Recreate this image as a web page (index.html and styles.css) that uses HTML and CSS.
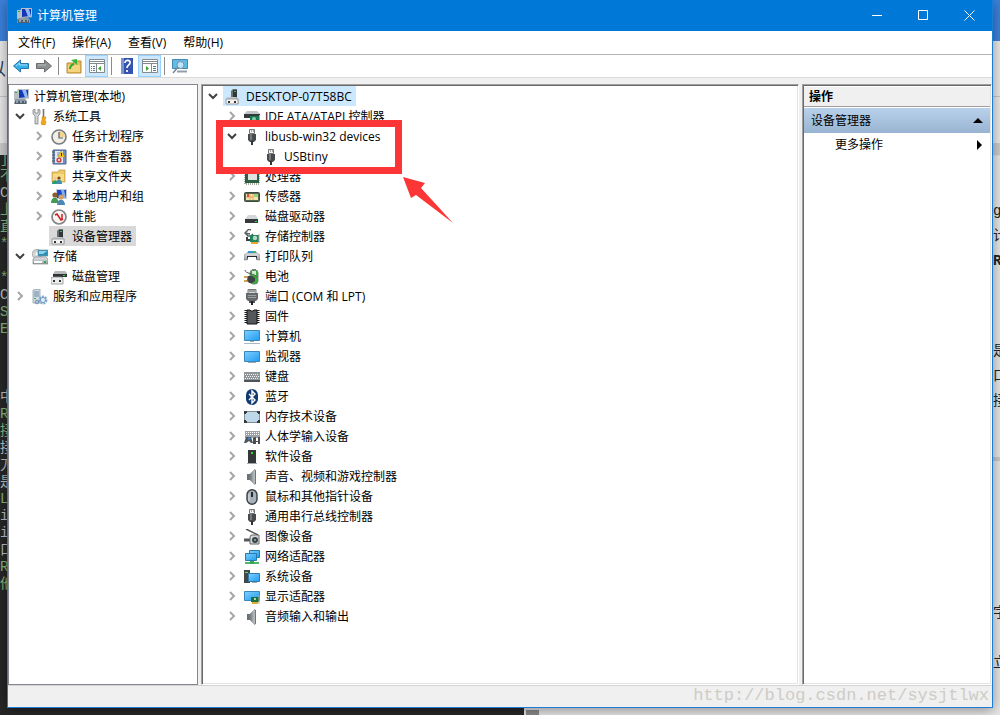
FILE: index.html
```html
<!DOCTYPE html>
<html lang="zh-CN">
<head>
  <meta charset="UTF-8">
  <meta name="viewport" content="width=device-width, initial-scale=1.0">
  <title>计算机管理</title>
  <link rel="stylesheet" href="styles.css">
</head>
<body>
  <!-- Icon set -->
  <svg class="sprite" aria-hidden="true">
    <defs>
      <linearGradient id="screen" x1="0" y1="0" x2="1" y2="1">
        <stop offset="0" stop-color="#7fd0ff"/>
        <stop offset="1" stop-color="#1f9bf0"/>
      </linearGradient>
      <linearGradient id="metal" x1="0" y1="0" x2="0" y2="1">
        <stop offset="0" stop-color="#e4e7e9"/>
        <stop offset="1" stop-color="#9a9fa3"/>
      </linearGradient>
      <linearGradient id="cone" x1="0" y1="0" x2="1" y2="0">
        <stop offset="0" stop-color="#6e7478"/>
        <stop offset="1" stop-color="#c8cdd0"/>
      </linearGradient>
    </defs>
    <symbol id="open" viewBox="0 0 14 14"><path d="M3 5l4 4 4-4" fill="none" stroke="#404040" stroke-width="2"/></symbol>
    <symbol id="closed" viewBox="0 0 14 14"><path d="M5 3l4 4-4 4" fill="none" stroke="#a6a6a6" stroke-width="2"/></symbol>
    <symbol id="mmc" viewBox="0 0 16 16">
      <path d="M5 0h11v9l-11 1z" fill="#d5d8dc" stroke="#8a9098" stroke-width=".6"/>
      <path d="M6 1h9v7l-9 1z" fill="#1238b8"/><path d="M9 1h4l2 7-3 .5z" fill="#8fb8f4"/>
      <path d="M1 2h4v9H1z" fill="#b8bec6"/><path d="M2 3h2v1H2z" fill="#26b040"/>
      <path d="M2 10h10l2 2v3H1z" fill="#8b98a5"/><path d="M2 12h11v3H2z" fill="#51606e"/><path d="M3 13h2M7 13h2M11 13h1" stroke="#dde4ea"/>
    </symbol>
    <symbol id="tools" viewBox="0 0 16 16">
      <path d="M1 1v4l2 2v8h3V7l2-2V1L6 0v4H3V0z" fill="#d3d5d7" stroke="#70757a" stroke-width=".7"/>
      <path d="M11 0h1v8h-1z" fill="#777" stroke="#777" stroke-width=".6"/><path d="M10 8h4l-1 3 1 2-1 3h-3l-1-2 1-3z" fill="#f0a91c" stroke="#c27c0c" stroke-width=".5"/>
    </symbol>
    <symbol id="clock" viewBox="0 0 16 16">
      <circle cx="8" cy="8" r="7" fill="#f3eee2" stroke="#777c82" stroke-width="1.6"/>
      <path d="M8 8V2a6 6 0 0 1 6 6z" fill="#f7d28b"/><path d="M8 3v6h4" fill="none" stroke="#53616d" stroke-width="1.2"/>
    </symbol>
    <symbol id="event" viewBox="0 0 16 16">
      <path d="M2 1h13v14H2z" fill="#6f8fc0" stroke="#4d6688"/><path d="M4 2h8v12H4z" fill="#dfe9f3"/>
      <path d="M1 3h3M1 6h3M1 9h3M1 12h3" stroke="#4d5966"/><path d="M6 4h3M6 6h2" stroke="#7f93aa"/><path d="M10 2l4 6H7z" fill="#ffcc18" stroke="#ae8200" stroke-width=".5"/><path d="M10.500 4v3" stroke="#333"/>
      <circle cx="8" cy="11" r="2.600" fill="#d63b3b"/><path d="M7 10l2 2m0-2l-2 2" stroke="#fff" stroke-width=".8"/>
    </symbol>
    <symbol id="share" viewBox="0 0 16 16">
      <path d="M1 3h6l1-2h6v12H1z" fill="#edc863" stroke="#bd9640" stroke-width=".7"/><path d="M2 5h11v7H2z" fill="#f7dc87"/>
      <circle cx="4" cy="9" r="1.6" fill="#f0c69c"/><circle cx="8" cy="9" r="1.6" fill="#754524"/><path d="M1 15c0-5 6-5 6 0z" fill="#2e9b73"/><path d="M5 15c0-6 6-6 6 0z" fill="#3c91a7"/>
    </symbol>
    <symbol id="users" viewBox="0 0 16 16">
      <path d="M5 0h11v10H5z" fill="#c8ccd4"/><path d="M6 1h9v8H6z" fill="#1c48c8"/><path d="M10 1h3l2 8h-3z" fill="#85adf0"/>
      <circle cx="4" cy="6" r="2.6" fill="#8b5c24"/><circle cx="10" cy="8" r="2.6" fill="#d2a062"/><path d="M0 14c0-7 7-7 8 0z" fill="#479951"/><path d="M6 16c0-7 8-7 8 0z" fill="#4c87b6"/>
    </symbol>
    <symbol id="perf" viewBox="0 0 16 16">
      <circle cx="8" cy="8" r="7" fill="#f8f6f3" stroke="#858585" stroke-width="1.7"/><path d="M4 6l2-1 4 6 2-1M11 5v5" fill="none" stroke="#cc1d1d" stroke-width="1.5"/>
    </symbol>
    <symbol id="device" viewBox="0 0 16 16">
      <path d="M6 2l2-2h4v9H6z" fill="#6d7173"/><path d="M8 1h4v8H8z" fill="#333738"/>
      <path d="M9 2h2v1H9z" fill="#37c05c"/>
      <path d="M2 8h9l3 2v5H1v-5z" fill="#c3c7c9"/><path d="M1 10h12v5H1z" fill="#f4f4f4" stroke="#8a8d90" stroke-width=".8"/><path d="M3 12h2v2H3zM9 12h2v2H9z" fill="#333"/>
    </symbol>
    <symbol id="storage" viewBox="0 0 16 16">
      <ellipse cx="5" cy="5" rx="5" ry="4.5" fill="#d2d5d6" stroke="#8d9194" stroke-width=".7"/><circle cx="5" cy="5" r="1.5" fill="#fff"/>
      <path d="M6 1h10v6H6z" fill="#2890b8" stroke="#78929f" stroke-width=".7"/><path d="M7 2h8l-4 3H7z" fill="#8fd2e7"/>
      <path d="M1 10l2-2h11l2 2v5H1z" fill="url(#metal)" stroke="#75797b" stroke-width=".6"/><path d="M2 12h8v2H2z" fill="#fff"/><path d="M12 12h2v2h-2z" fill="#1fb13e"/>
    </symbol>
    <symbol id="disks" viewBox="0 0 16 16">
      <path d="M4 2h10l2 2v1H2z" fill="#b6babb"/><path d="M2 5h14v3H2z" fill="#303435"/><path d="M12 6h2v1h-2z" fill="#2fd64e"/><path d="M0 9l2-1h8l2 1v6H0z" fill="#eceeee" stroke="#8a8d90" stroke-width=".8"/><path d="M2 11h2v2H2zM8 11h2v2H8z" fill="#333"/>
    </symbol>
    <symbol id="services" viewBox="0 0 16 16">
      <path d="M1 1l7-1v14H1z" fill="#d3dce5" stroke="#8594a3" stroke-width=".7"/><path d="M2 3h5M2 5h5M2 7h5" stroke="#6987a4"/><path d="M2 9h2v1H2z" fill="#36b04c"/>
      <circle cx="11" cy="11" r="3.5" fill="none" stroke="#7daad0" stroke-width="2" stroke-dasharray="2 1"/><circle cx="11" cy="11" r="2.6" fill="#e3eef7" stroke="#6b9ac3"/><circle cx="5" cy="13" r="1.8" fill="#a9c4da" stroke="#7391ad"/>
    </symbol>
    <symbol id="ide" viewBox="0 0 16 16">
      <path d="M3 2h10l3 3H0z" fill="#bfc4c6"/><path d="M0 5h16v4H0z" fill="#35393b"/><path d="M6 7h9v7H6z" fill="#167a50"/><circle cx="10" cy="10" r="2" fill="#8dc9a9"/><path d="M15.500 6v9" stroke="#aaa"/>
    </symbol>
    <symbol id="usb" viewBox="0 0 16 16">
      <path d="M5.500.5h5v4h-5z" fill="#f1f1f1" stroke="#777"/><path d="M7 2h1m1 0h1" stroke="#666"/><path d="M4 5h8v6l-2 2H6l-2-2z" fill="#484b4d"/><path d="M6 5h2v6H6z" fill="#777b7e"/><path d="M8 12v4" stroke="#333" stroke-width="2"/>
    </symbol>
    <symbol id="cpu" viewBox="0 0 16 16">
      <path d="M1 1h14v14H1z" fill="none" stroke="#4b5945" stroke-width="1" stroke-dasharray="1 1"/><path d="M1 1h14v13H1z" fill="#2c5f41"/><path d="M4 3h9v8H4z" fill="#dfe2e1"/>
    </symbol>
    <symbol id="sensor" viewBox="0 0 16 16">
      <rect x=".5" y="3.500" width="15" height="9" rx="1" fill="#52694f" stroke="#3d4a3b"/><path d="M2 5h12v6H2z" fill="#eee7af"/><path d="M2 8h7M6 5v6M9 5v6" stroke="#e6a75f"/><path d="M3 5h2v3H3z" fill="#df4848"/><path d="M10 5h4v3h-4z" fill="#a6cd7b"/>
    </symbol>
    <symbol id="drive" viewBox="0 0 16 16">
      <path d="M4 6h8l2 4H1z" fill="#d4d6d7"/><path d="M1 10h13v4H1z" fill="#34393b"/><path d="M11 12h2v1h-2z" fill="#2fe157"/>
    </symbol>
    <symbol id="controller" viewBox="0 0 16 16">
      <path d="M7 1L5 0 1 4l3 3h3L9 5M1 4l5 1" fill="none" stroke="#5d6062" stroke-width="1.5"/><path d="M3 8v3h3" fill="none" stroke="#3d4042" stroke-width="2"/><path d="M6 6h9v7H6z" fill="#20845b"/><circle cx="11" cy="9" r="2.200" fill="#b7d8c7"/><path d="M15 5v9" stroke="#aaa"/><path d="M7 14h7" stroke="#eaa72e" stroke-width="2"/>
    </symbol>
    <symbol id="printer" viewBox="0 0 16 16">
      <path d="M4 2h8l1 4H3z" fill="#2c9ddf"/><path d="M9 2h3v4H9z" fill="#45bd52"/><path d="M0 6l3-2h10l3 2v5H0z" fill="url(#metal)" stroke="#777" stroke-width=".5"/><path d="M3 7h10v4H3z" fill="#252a2e"/><path d="M4 8h8l1 5H3z" fill="#fff"/>
    </symbol>
    <symbol id="battery" viewBox="0 0 16 16">
      <path d="M8 0h4v2H8z" fill="#777"/><rect x="6" y="1" width="8" height="14" rx="3" fill="#37ad3b" stroke="#75847b"/><path d="M8 2h4v4H8z" fill="#caf0cb"/><path d="M1 1c0 4 9 3 12 7" fill="none" stroke="#55595b"/><path d="M0 8h4M0 12h4" stroke="#c38218" stroke-width="1.500"/><path d="M4 7h4l3 2v3l-3 2H5l-2-3z" fill="#3e4245"/>
    </symbol>
    <symbol id="port" viewBox="0 0 16 16">
      <path d="M4 .5h8v4H4z" fill="#d2d4d5" stroke="#777"/><path d="M6 1v2m2-2v2m2-2v2" stroke="#666"/><path d="M2 4h12v6l-2 2H4l-2-2z" fill="#65696c"/><path d="M4 6.500h8M4 8.500h8" stroke="#9ba0a3"/><path d="M5 12h6v2H5z" fill="#515456"/><path d="M8 12v4" stroke="#222" stroke-width="2"/>
    </symbol>
    <symbol id="firmware" viewBox="0 0 16 16">
      <path d="M2 1v14M14 1v14" stroke="#191919" stroke-width="3" stroke-dasharray="1 1"/><path d="M3 1h3l1 1h2l1-1h3v14H3z" fill="#55585a" stroke="#151515"/>
    </symbol>
    <symbol id="computer" viewBox="0 0 16 16">
      <path d="M.5 1.500h15v10H.5z" fill="url(#screen)" stroke="#3a86b8"/><path d="M6 12h4v1H6z" fill="#9faab1"/><path d="M0 14.500h16" stroke="#a9bac4"/>
    </symbol>
    <symbol id="monitor" viewBox="0 0 16 16">
      <path d="M.5 2.500h15v10H.5z" fill="url(#screen)" stroke="#3a86b8"/><path d="M4 13.500h8" stroke="#9faab1"/>
    </symbol>
    <symbol id="keyboard" viewBox="0 0 16 16">
      <path d="M0 3h16v10H0z" fill="#8f9599"/><path d="M0 11h16v2H0z" fill="#4e5457"/><path d="M1 5.500h14M2 7.500h13M1 9.500h14" stroke="#f0f2f3" stroke-dasharray="1 1"/>
    </symbol>
    <symbol id="bluetooth" viewBox="0 0 16 16">
      <rect x="2" width="12" height="16" rx="6" fill="#113a70"/><path d="M5 5l6 6-3 3V2l3 3-6 6" fill="none" stroke="#fff" stroke-width="1.400"/>
    </symbol>
    <symbol id="memory" viewBox="0 0 16 16">
      <rect x=".5" y="2.500" width="15" height="11" rx="2" fill="#bfd8e9" stroke="#7e8b95"/><path d="M1 5V3h2M13 3h2v2M1 11v2h2M13 13h2v-2" fill="none" stroke="#343a3e" stroke-width="2"/>
    </symbol>
    <symbol id="hid" viewBox="0 0 16 16">
      <path d="M1 2h15v7H1z" fill="#9ba1a5"/><path d="M2 3.500h13M2 5.500h13" stroke="#fff" stroke-dasharray="1 1"/><path d="M0 14l2-6h5l2 6H7l-2-2-3 2z" fill="#4f555b"/><circle cx="5" cy="9.500" r="1.200" fill="#2a86df"/><path d="M9 15V9l2-1h1v4h2V8h2v7h-2v-2h-2v2z" fill="#4a4f52"/>
    </symbol>
    <symbol id="software" viewBox="0 0 16 16">
      <path d="M4 1h8v13H4z" fill="#343839"/><path d="M7 3h2v2H7z" fill="#24e02e"/><path d="M3 14h10v1H3z" fill="#a3a6a8"/>
    </symbol>
    <symbol id="sound" viewBox="0 0 16 16">
      <path d="M3 5h3v6H3z" fill="#6a7074"/><path d="M6 5l5-5v16l-5-5z" fill="url(#cone)" stroke="#8a9094" stroke-width=".5"/><path d="M11.500 1v14" stroke="#707679"/>
    </symbol>
    <symbol id="mouse" viewBox="0 0 16 16">
      <rect x="3" y=".7" width="10" height="14.600" rx="5" fill="#a8b1b9" stroke="#373d42" stroke-width="1.400"/><rect x="7" y="3" width="2" height="5" fill="#252a2d"/><path d="M5 5v7" stroke="#e0e5e8"/>
    </symbol>
    <symbol id="imaging" viewBox="0 0 16 16">
      <path d="M2 0l12 6" stroke="#4d5256" stroke-width="1.500"/><path d="M0 11h8" stroke="#55595b" stroke-width="3"/><path d="M7 6h8v9H6V8z" fill="#d4d7d9" stroke="#666"/><circle cx="11" cy="11" r="3" fill="#384147"/><circle cx="11" cy="11" r="1" fill="#80bd9c"/>
    </symbol>
    <symbol id="network" viewBox="0 0 16 16">
      <path d="M5.500 1.500h10v7h-10z" fill="url(#screen)" stroke="#287ba9"/><path d="M1.500 4.500h11v7h-11z" fill="url(#screen)" stroke="#287ba9"/><path d="M1 14h14" stroke="#50b66a" stroke-width="2"/><path d="M6 12h4v3H6z" fill="#38a454"/>
    </symbol>
    <symbol id="system" viewBox="0 0 16 16">
      <path d="M0 1h6v13H0z" fill="#42474a"/><path d="M1 3h3v1H1z" fill="#60db5c"/><path d="M4.500 4.500h11v8h-11z" fill="url(#screen)" stroke="#2e7ba9"/><path d="M8 13.500h5" stroke="#a0a9ae"/>
    </symbol>
    <symbol id="display" viewBox="0 0 16 16">
      <path d="M.5 2.500h15v9H.5z" fill="url(#screen)" stroke="#3a86b8"/><path d="M7 8h8v5H7z" fill="#18733f"/><path d="M8 13h6v2H8z" fill="#e3ad31"/><path d="M10 9h2v2h-2z" fill="#b1d1bb"/><path d="M15 6v9" stroke="#aaa"/>
    </symbol>
  </svg>

  <div class="desktop">
    <!-- Windows behind the console -->
    <div class="browser">
      <div class="browser-bar"></div>
      <div class="browser-head"><span>以</span></div>
      <div class="browser-band"></div>
      <div class="article">
<pre>g
计
<b>RE</b></pre>
<pre>是
口
接</pre>
        <hr>
<pre>字

立</pre>
      </div>
    </div>
    <div class="editor">
<pre>]
不
<i>C</i>
上
直
*

*
<i>CS</i>
S
E



<i>中</i>
R
接
<i>接</i>
<i>刀</i>
<i>是</i>
L
<i>in</i>
<i>in</i>
<i>口</i>
R
他</pre>
    </div>

    <div class="window">
      <header class="titlebar">
        <svg class="icon"><use href="#mmc"/></svg>
        <h1>计算机管理</h1>
        <button class="caption" aria-label="最小化"><svg viewBox="0 0 11 11"><path d="M0 5.500h10"/></svg></button>
        <button class="caption" aria-label="最大化"><svg viewBox="0 0 11 11"><path d="M.5.5h9v9h-9z"/></svg></button>
        <button class="caption" aria-label="关闭"><svg viewBox="0 0 11 11"><path d="M.5.5l10 10m0-10l-10 10"/></svg></button>
      </header>

      <nav class="menubar">
        <button>文件(F)</button>
        <button>操作(A)</button>
        <button>查看(V)</button>
        <button>帮助(H)</button>
      </nav>

      <div class="toolbar">
        <button aria-label="后退"><svg class="icon" viewBox="0 0 16 16"><path d="M.5 8l7-6v3.500h8v5h-8V14z" fill="#36aee8" stroke="#2676ad"/><path d="M3 8l3.500-3v2H14" fill="none" stroke="#a3e0fa"/></svg></button>
        <button aria-label="前进"><svg class="icon" viewBox="0 0 16 16"><path d="M15.500 8l-7-6v3.500h-8v5h8V14z" fill="#8d9091" stroke="#696d6f"/><path d="M2 7h8" stroke="#b9bcbe"/></svg></button>
        <span class="separator"></span>
        <button aria-label="向上"><svg class="icon" viewBox="0 0 16 16"><path d="M1 5h7l1-2h6v12H1z" fill="#e8bd5d" stroke="#b78b35"/><path d="M2 7h12v7H2z" fill="#f4d47f"/><path d="M4 11c0-3 1-4 4-5" fill="none" stroke="#31a835" stroke-width="2"/><path d="M5 2l6-1v6z" fill="#37b43b"/></svg></button>
        <button class="pressed" aria-label="显示/隐藏控制台树"><svg class="icon" viewBox="0 0 16 16"><path d="M.5 1.500h15v13H.5z" fill="#fff" stroke="#858a8e"/><path d="M1 3.500h14M1 5.500h14M7.500 6v8" stroke="#858a8e"/><path d="M2 8.500h1m1 0h2M2 10.500h1m1 0h2M2 12.500h1m1 0h2" stroke="#587798"/><path d="M12 8v5l-3-2.500z" fill="#38a52b"/></svg></button>
        <span class="separator"></span>
        <button aria-label="帮助"><svg class="icon" viewBox="0 0 16 16"><path d="M2 0h12v16H2z" fill="#3553ae"/><path d="M2 0h3v16H2z" fill="#7893cf"/><path d="M6 5c0-4 6-3 5 0 0 2-3 2-3 5m0 2v2" fill="none" stroke="#fff" stroke-width="1.700"/></svg></button>
        <button class="pressed" aria-label="显示/隐藏操作窗格"><svg class="icon" viewBox="0 0 16 16"><path d="M.5 1.500h15v13H.5z" fill="#fff" stroke="#858a8e"/><path d="M1 3.500h14M1 5.500h14M9.500 6v8" stroke="#858a8e"/><path d="M11 8.500h3m-3 2h3m-3 2h3" stroke="#587798"/><path d="M4 8v5l3-2.500z" fill="#38a52b"/></svg></button>
        <span class="separator"></span>
        <button aria-label="扫描检测硬件改动"><svg class="icon" viewBox="0 0 16 16"><path d="M.5 1.500h15v9H.5z" fill="#60bce7" stroke="#4588a9"/><path d="M5 13.500h10" stroke="#90a0aa" stroke-width="2"/><circle cx="8.500" cy="7" r="3.500" fill="#c0e5f6" stroke="#80919c"/><path d="M6 9l-5 6" stroke="#718a9d" stroke-width="1.500"/></svg></button>
      </div>

      <main class="panes">
        <section class="pane scope">
          <ul class="tree">
            <li>
              <div class="row"><span class="item"><svg class="icon"><use href="#mmc"/></svg>计算机管理(本地)</span></div>
              <ul class="first">
                <li>
                  <div class="row"><svg class="twist"><use href="#open"/></svg><span class="item"><svg class="icon"><use href="#tools"/></svg>系统工具</span></div>
                  <ul>
                    <li class="row"><svg class="twist"><use href="#closed"/></svg><span class="item"><svg class="icon"><use href="#clock"/></svg>任务计划程序</span></li>
                    <li class="row"><svg class="twist"><use href="#closed"/></svg><span class="item"><svg class="icon"><use href="#event"/></svg>事件查看器</span></li>
                    <li class="row"><svg class="twist"><use href="#closed"/></svg><span class="item"><svg class="icon"><use href="#share"/></svg>共享文件夹</span></li>
                    <li class="row"><svg class="twist"><use href="#closed"/></svg><span class="item"><svg class="icon"><use href="#users"/></svg>本地用户和组</span></li>
                    <li class="row"><svg class="twist"><use href="#closed"/></svg><span class="item"><svg class="icon"><use href="#perf"/></svg>性能</span></li>
                    <li class="row"><svg class="twist"></svg><span class="item inactive"><svg class="icon"><use href="#device"/></svg>设备管理器</span></li>
                  </ul>
                </li>
                <li>
                  <div class="row"><svg class="twist"><use href="#open"/></svg><span class="item"><svg class="icon"><use href="#storage"/></svg>存储</span></div>
                  <ul>
                    <li class="row"><svg class="twist"></svg><span class="item"><svg class="icon"><use href="#disks"/></svg>磁盘管理</span></li>
                  </ul>
                </li>
                <li class="row"><svg class="twist"><use href="#closed"/></svg><span class="item"><svg class="icon"><use href="#services"/></svg>服务和应用程序</span></li>
              </ul>
            </li>
          </ul>
        </section>

        <section class="pane sunken">
          <ul class="tree">
            <li>
              <div class="row"><svg class="twist"><use href="#open"/></svg><span class="item selected"><svg class="icon"><use href="#device"/></svg>DESKTOP-07T58BC</span></div>
              <ul>
                <li class="row"><svg class="twist"><use href="#closed"/></svg><span class="item"><svg class="icon"><use href="#ide"/></svg>IDE ATA/ATAPI 控制器</span></li>
                <li class="marked">
                  <div class="row"><svg class="twist"><use href="#open"/></svg><span class="item"><svg class="icon"><use href="#usb"/></svg>libusb-win32 devices</span></div>
                  <ul>
                    <li class="row"><svg class="twist"></svg><span class="item"><svg class="icon"><use href="#usb"/></svg>USBtiny</span></li>
                  </ul>
                  <svg class="arrow" viewBox="0 0 52 48"><path d="M1 1l22 6-4 5 32 35-37-28-5 3z"/></svg>
                </li>
                <li class="row"><svg class="twist"><use href="#closed"/></svg><span class="item"><svg class="icon"><use href="#cpu"/></svg>处理器</span></li>
                <li class="row"><svg class="twist"><use href="#closed"/></svg><span class="item"><svg class="icon"><use href="#sensor"/></svg>传感器</span></li>
                <li class="row"><svg class="twist"><use href="#closed"/></svg><span class="item"><svg class="icon"><use href="#drive"/></svg>磁盘驱动器</span></li>
                <li class="row"><svg class="twist"><use href="#closed"/></svg><span class="item"><svg class="icon"><use href="#controller"/></svg>存储控制器</span></li>
                <li class="row"><svg class="twist"><use href="#closed"/></svg><span class="item"><svg class="icon"><use href="#printer"/></svg>打印队列</span></li>
                <li class="row"><svg class="twist"><use href="#closed"/></svg><span class="item"><svg class="icon"><use href="#battery"/></svg>电池</span></li>
                <li class="row"><svg class="twist"><use href="#closed"/></svg><span class="item"><svg class="icon"><use href="#port"/></svg>端口 (COM 和 LPT)</span></li>
                <li class="row"><svg class="twist"><use href="#closed"/></svg><span class="item"><svg class="icon"><use href="#firmware"/></svg>固件</span></li>
                <li class="row"><svg class="twist"><use href="#closed"/></svg><span class="item"><svg class="icon"><use href="#computer"/></svg>计算机</span></li>
                <li class="row"><svg class="twist"><use href="#closed"/></svg><span class="item"><svg class="icon"><use href="#monitor"/></svg>监视器</span></li>
                <li class="row"><svg class="twist"><use href="#closed"/></svg><span class="item"><svg class="icon"><use href="#keyboard"/></svg>键盘</span></li>
                <li class="row"><svg class="twist"><use href="#closed"/></svg><span class="item"><svg class="icon"><use href="#bluetooth"/></svg>蓝牙</span></li>
                <li class="row"><svg class="twist"><use href="#closed"/></svg><span class="item"><svg class="icon"><use href="#memory"/></svg>内存技术设备</span></li>
                <li class="row"><svg class="twist"><use href="#closed"/></svg><span class="item"><svg class="icon"><use href="#hid"/></svg>人体学输入设备</span></li>
                <li class="row"><svg class="twist"><use href="#closed"/></svg><span class="item"><svg class="icon"><use href="#software"/></svg>软件设备</span></li>
                <li class="row"><svg class="twist"><use href="#closed"/></svg><span class="item"><svg class="icon"><use href="#sound"/></svg>声音、视频和游戏控制器</span></li>
                <li class="row"><svg class="twist"><use href="#closed"/></svg><span class="item"><svg class="icon"><use href="#mouse"/></svg>鼠标和其他指针设备</span></li>
                <li class="row"><svg class="twist"><use href="#closed"/></svg><span class="item"><svg class="icon"><use href="#usb"/></svg>通用串行总线控制器</span></li>
                <li class="row"><svg class="twist"><use href="#closed"/></svg><span class="item"><svg class="icon"><use href="#imaging"/></svg>图像设备</span></li>
                <li class="row"><svg class="twist"><use href="#closed"/></svg><span class="item"><svg class="icon"><use href="#network"/></svg>网络适配器</span></li>
                <li class="row"><svg class="twist"><use href="#closed"/></svg><span class="item"><svg class="icon"><use href="#system"/></svg>系统设备</span></li>
                <li class="row"><svg class="twist"><use href="#closed"/></svg><span class="item"><svg class="icon"><use href="#display"/></svg>显示适配器</span></li>
                <li class="row"><svg class="twist"><use href="#closed"/></svg><span class="item"><svg class="icon"><use href="#sound"/></svg>音频输入和输出</span></li>
              </ul>
            </li>
          </ul>
        </section>

        <aside class="pane sunken actions">
          <h2>操作</h2>
          <button class="group">设备管理器<svg viewBox="0 0 10 6"><path d="M0 5l5-5 5 5z"/></svg></button>
          <button class="more">更多操作<svg viewBox="0 0 6 10"><path d="M0 0l5 5-5 5z"/></svg></button>
        </aside>
      </main>

      <footer class="statusbar"><span>http://blog.csdn.net/sysjtlwx</span></footer>
    </div>
  </div>
</body>
</html>
```
FILE: styles.css
```css
* {
  box-sizing: border-box;
}

body {
  margin: 0;
  font-family: "Open Sans", "Noto Sans CJK SC", sans-serif;
  font-size: 12px;
  line-height: 20px;
  color: #000;
}

button {
  border: none;
  background: none;
  padding: 0;
  font: inherit;
  color: inherit;
}

ul {
  list-style: none;
  margin: 0;
  padding: 0;
}

pre {
  margin: 0;
  font-family: "Liberation Mono", "Noto Sans CJK SC", monospace;
}

.sprite {
  position: absolute;
  width: 0;
  height: 0;
}

.desktop {
  position: relative;
  height: 100vh;
  overflow: hidden;
}

/* Background windows */
.browser {
  height: 100%;
  background:
    linear-gradient(#8a8a8a, #8a8a8a) 526px 100% / 13px 5px no-repeat,
    #e6e6e6;
}

.browser-bar {
  height: 41px;
  background-color: #3c82dc;
}

.browser-head {
  height: 102px;
  background: linear-gradient(#c4c6cc, #c4c6cc) 0 55px / 100% 1px no-repeat #e9e9ea;
  font-size: 18px;
  line-height: 56px;
  color: #33405c;
}

.browser-head span {
  margin-left: -12px;
}

.browser-band {
  height: 12px;
  background-color: #cccccc;
}

.article {
  width: 7px;
  margin-left: auto;
  padding-top: 43px;
  overflow: hidden;
  border-top: 1px solid #ddd;
  color: #222;
}

.article pre {
  font-size: 14px;
  line-height: 25px;
  margin-bottom: 65px;
}

.article pre + pre {
  margin-bottom: 43px;
}

.article hr {
  margin: 0 0 140px;
  border: none;
  border-top: 4px solid #c8c8c8;
}

.editor {
  position: absolute;
  top: 155px;
  bottom: 0;
  left: 0;
  width: 524px;
  overflow: hidden;
  background-color: #272727;
}

.editor pre {
  margin-top: -4px;
  font-size: 14px;
  line-height: 17px;
  color: #86b57c;
}

.editor i {
  font-style: normal;
  color: #b9bec4;
}

/* Console window */
.window {
  position: absolute;
  top: 0;
  right: 7px;
  bottom: 7px;
  left: 7px;
  display: flex;
  flex-direction: column;
  border: 1px solid #1a7fd4;
  border-top: none;
  background-color: #f0f0f0;
  box-shadow: 0 2px 12px rgba(0, 0, 0, 0.4);
}

.titlebar {
  display: flex;
  align-items: center;
  height: 31px;
  padding-left: 8px;
  background-color: #0078d7;
  color: #fff;
}

.titlebar h1 {
  flex: 1;
  margin: 0 0 0 5px;
  font-size: 12px;
  font-weight: normal;
}

.caption {
  width: 46px;
  height: 31px;
}

.caption svg {
  display: block;
  width: 11px;
  height: 11px;
  margin: auto;
  fill: none;
  stroke: #fff;
}

.menubar {
  display: flex;
  gap: 17px;
  height: 24px;
  padding: 1px 0 0 10px;
  border-bottom: 1px solid #b4b4b4;
  background-color: #fff;
}

.toolbar {
  display: flex;
  align-items: center;
  height: 23px;
  padding-left: 1px;
  border-bottom: 1px solid #dadada;
  background-color: #fff;
}

.toolbar button {
  width: 23px;
  height: 22px;
  border: 1px solid transparent;
}

.toolbar button.pressed {
  border-color: #99d1ff;
  background-color: #cce8ff;
}

.toolbar .icon {
  margin: auto;
}

.separator {
  width: 1px;
  height: 18px;
  margin: 0 3px;
  background-color: #8c8c8c;
}

.icon {
  display: block;
  flex: none;
  width: 16px;
  height: 16px;
}

.panes {
  flex: 1;
  display: grid;
  grid-template-columns: 190px 1fr 190px;
  gap: 3px;
  min-height: 0;
  padding-top: 6px;
}

.pane {
  background-color: #fff;
}

.scope {
  border: 1px solid #828790;
}

.sunken {
  border: 1px solid;
  border-color: #a0a0a0 #fff #fff #a0a0a0;
  box-shadow: inset 1px 1px #696969, inset -1px -1px #e3e3e3;
}

/* Trees */
.tree {
  padding: 1px 0 0 4px;
}

.tree ul {
  padding-left: 19px;
}

.tree ul.first {
  padding-left: 0;
}

.row {
  display: flex;
  height: 20px;
}

.twist {
  flex: none;
  width: 14px;
  height: 14px;
  margin: 3px 3px 3px 0;
}

.item {
  display: flex;
  align-items: center;
  gap: 5px;
  height: 20px;
  padding: 1px 4px 0 2px;
  white-space: nowrap;
}

.scope > .tree > li > .row > .item {
  padding-left: 0;
}

.selected {
  background-color: #cce8ff;
}

.inactive {
  background-color: #d9d9d9;
}

/* Red frame around the device and the arrow pointing at it */
.marked {
  position: relative;
  z-index: 1;
}

.marked::after {
  content: "";
  position: absolute;
  box-sizing: border-box;
  top: -6px;
  left: -9px;
  width: 186px;
  height: 54px;
  border: 7px solid #fc3636;
}

.arrow {
  position: absolute;
  top: 50px;
  left: 177px;
  width: 52px;
  height: 48px;
  fill: #fc3636;
}

/* Actions pane */
.actions {
  padding: 2px 1px 1px;
}

.actions h2 {
  height: 20px;
  margin: 0 0 1px;
  padding-left: 5px;
  border-bottom: 1px solid #a0a0a0;
  background-color: #f0f0f0;
  font-size: 12px;
  font-weight: bold;
}

.actions button {
  display: flex;
  align-items: center;
  justify-content: space-between;
  width: 100%;
  height: 25px;
  padding: 0 7px;
}

.actions .group {
  background: linear-gradient(#b9d1ea, #98b4d2);
}

.actions .more {
  height: 23px;
  padding-left: 31px;
}

.group svg {
  width: 10px;
  height: 6px;
}

.more svg {
  width: 6px;
  height: 10px;
}

.statusbar {
  height: 22px;
  border-top: 1px solid #d4d4d4;
  padding-right: 3px;
  text-align: right;
  font-family: "Liberation Mono", monospace;
  font-size: 17px;
  color: #cdccc6;
}
```
